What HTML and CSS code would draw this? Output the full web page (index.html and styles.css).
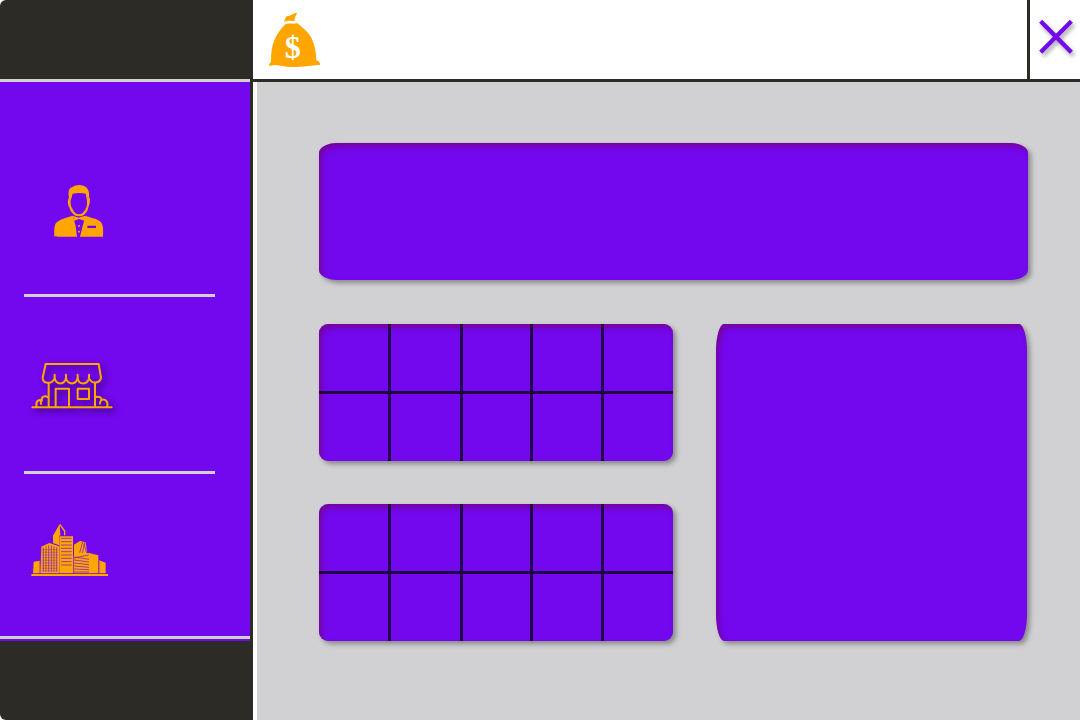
FILE: index.html
```html
<!DOCTYPE html>
<html lang="en">
<head>
<meta charset="utf-8">
<meta name="viewport" content="width=device-width, initial-scale=1">
<title>Dashboard</title>
<link rel="stylesheet" href="styles.css">
</head>
<body>
<div class="app">
  <aside class="sidebar">
    <div class="sidebar-head"></div>
    <nav class="nav" aria-label="Main">
      <div class="nav-item nav-item-person">
        <button class="icon-button" type="button" aria-label="Manager">
          <svg width="52" height="54" viewBox="39 27 156 162" fill="#ffa500">
            <path fill-rule="evenodd" d="M87 68C83 48 88 38 98 36C106 28 131 27 141 39C148 47 148 58 147 66C151 70 151 84 146 94C144 107 138 114 132 119C124 125 110 125 102 119C95 113 90 107 88 97C83 90 82 76 87 68ZM98 56C96 62 95 70 92 75V90C95 99 100 108 105 113C109 117 113 118 117 118C121 118 125 117 129 113C135 107 139 99 141 90V75C139 70 139 62 137 56C124 53 110 53 98 56Z"/>
            <path d="M98 122L102 135L107 153L111 185L51 185L48 183L43 185C42 161 43 146 52 140C65 130 82 128 98 122Z"/>
            <path fill-rule="evenodd" d="M136 122C151 128 169 130 180 139C190 148 190 160 189 185L120 185L128 153L133 136ZM142 152V159H168V152Z"/>
            <path d="M99 122L115 128L135 122L136 138L117 132L101 138Z"/>
            <circle cx="117" cy="153" r="3"/><circle cx="117" cy="170" r="3"/>
          </svg>
        </button>
      </div>
      <div class="nav-item nav-item-shop">
        <button class="icon-button icon-raised" type="button" aria-label="Shop">
          <svg width="82" height="47" viewBox="33 38 246 141" fill="none" stroke="#ffa500" stroke-width="6" stroke-linejoin="round" stroke-linecap="round">
            <path d="M77 41H236L243 82C241 99 216 103 207 84C201 105 177 104 173 84C167 105 144 104 138 84C132 105 109 104 104 84C94 105 68 99 68 82L77 41"/>
            <path d="M104 73V85M138 73V85M173 73V85M207 73V85"/>
            <path d="M86 99V169M225 99V169M107 169V115H147V169M173 115H207V146H173Z"/>
            <path d="M37 171H275M50 169C46 153 56 146 66 150C62 139 76 134 84 141M66 150C61 153 62 158 63 161M227 140C237 137 245 141 244 149C256 144 266 155 261 169M244 149C241 153 239 157 240 160"/>
          </svg>
        </button>
      </div>
      <div class="nav-item nav-item-city">
        <button class="icon-button" type="button" aria-label="City">
          <svg width="79" height="54" viewBox="30 24 237 162" fill="#ffa500">
            <path d="M34 177H264V183H34ZM39 175L41 140L59 137V175ZM61 175L64 95L88 84L117 94V175ZM118 175V64H159V175ZM99 84V62L119 27L121 62H117V91ZM162 89L180 78L197 82L202 116L162 122ZM161 122L208 114L235 121V175H161ZM238 136L257 143V175H238Z"/>
            <path d="M119 28L134 48V61" fill="none" stroke="#ffa500" stroke-width="4"/>
            <g fill="none" stroke="#7307ee" stroke-width="2">
              <path d="M123 70H155M123 80H155M123 90H155M123 100H155M123 110H155M123 120H155M123 130H155M123 140H155M123 150H155"/>
              <path d="M70 98V170M78 94V170M86 91V170M94 91V170M102 94V170M110 97V170"/>
              <path stroke-width="1" d="M65 104H113M65 112H113M65 120H113M65 128H113M65 136H113M65 144H113M65 152H113M65 160H113M65 168H113"/>
              <path d="M162 126L207 133M162 135L207 141M162 144L207 149M162 153L207 157M162 162L207 164M162 171L207 171M162 129L206 120"/>
              <path d="M179 113L188 81M187 114L194 82M192 86L200 114"/>
            </g>
          </svg>
        </button>
      </div>
    </nav>
    <div class="sidebar-foot"></div>
  </aside>

  <div class="content">
    <header class="topbar">
      <div class="money">
        <svg width="53" height="56" viewBox="39 36 159 168" role="img" aria-label="Money">
          <path fill="#ffa500" d="M87 65L93 50C101 46 108 47 114 42C118 39 122 38 127 39C122 46 119 54 118 64C109 61 98 62 87 65ZM91 73C103 67 114 74 126 69C142 82 159 95 169 113C179 132 184 158 184 181C193 183 196 190 195 194C181 195 168 197 154 199C128 202 98 202 78 197L58 195L43 198C40 193 44 190 48 185C48 164 49 142 58 121C65 104 76 87 91 73Z"/>
          <text class="money-sign" x="113" y="173" text-anchor="middle">$</text>
        </svg>
      </div>
      <button class="close" type="button" aria-label="Close">
        <svg width="36" height="36" viewBox="114 57 108 108" fill="none" stroke="#7307ee" stroke-width="13" stroke-linecap="butt">
          <path d="M122 64L214 157M214 64L122 157"/>
        </svg>
      </button>
    </header>
    <main class="board">
      <section class="card card-wide"></section>
      <section class="card card-cells">
        <div class="cell"></div><div class="cell"></div><div class="cell"></div><div class="cell"></div><div class="cell"></div>
        <div class="cell"></div><div class="cell"></div><div class="cell"></div><div class="cell"></div><div class="cell"></div>
      </section>
      <section class="card card-tall"></section>
      <section class="card card-cells">
        <div class="cell"></div><div class="cell"></div><div class="cell"></div><div class="cell"></div><div class="cell"></div>
        <div class="cell"></div><div class="cell"></div><div class="cell"></div><div class="cell"></div><div class="cell"></div>
      </section>
    </main>
  </div>
</div>
</body>
</html>
```
FILE: styles.css
```css
:root {
  --purple: #7307ee;
  --dark: #2d2b26;
  --grey: #d1d1d3;
}

* { box-sizing: border-box; }

body {
  margin: 0;
  background: #fff;
  font-family: "Liberation Serif", serif;
}

svg { display: block; }

.app {
  display: flex;
  min-height: 100vh;
}

.sidebar {
  display: flex;
  flex-direction: column;
  flex: 0 0 253px;
  border-right: 3px solid var(--dark);
  border-radius: 6px 0 0 6px;
  background: var(--dark);
  overflow: hidden;
}

.sidebar-head { height: 79px; }

.sidebar-foot {
  height: 81px;
  border-top: 2px solid var(--purple);
}

.nav {
  display: grid;
  grid-template-rows: 169fr 177fr 162fr;
  flex: 1;
  padding-top: 46px;
  border-top: 3px solid var(--grey);
  border-bottom: 3px solid var(--grey);
  background: var(--purple);
}

.nav-item {
  display: flex;
  align-items: center;
  margin: 0 35px 0 24px;
  border-bottom: 3px solid var(--grey);
}

.nav-item-person { padding-left: 29px; }
.nav-item-shop { padding: 4px 0 0 7px; }
.nav-item-city { padding: 0 0 10px 6px; border-bottom: 0; }

.icon-button {
  padding: 0;
  border: 0;
  background: none;
  cursor: pointer;
}

.icon-raised svg {
  overflow: visible;
  filter: drop-shadow(3px 3px 3px rgba(0, 0, 0, 0.6));
}

.content {
  display: flex;
  flex-direction: column;
  flex: 1;
}

.topbar {
  display: flex;
  justify-content: space-between;
  height: 82px;
  border-bottom: 3px solid var(--dark);
}

.money { padding: 12px 15px; }

.money-sign {
  fill: #fff;
  font: bold 96px "Liberation Serif", serif;
}

.close {
  width: 53px;
  padding: 0 0 5px 8px;
  border: 0;
  border-left: 3px solid var(--dark);
  background: #fff;
  cursor: pointer;
}

.close svg {
  overflow: visible;
  filter: drop-shadow(2px 3px 2px rgba(0, 0, 0, 0.35));
}

.board {
  display: grid;
  grid-template-columns: 354fr 312fr;
  grid-template-rows: 138fr 137fr 137fr;
  gap: 43px;
  flex: 1;
  padding: 61px 52px 79px 62px;
  border-left: 4px solid #fff;
  background: var(--grey);
}

.card {
  background: var(--purple);
  box-shadow:
    3px 3px 5px rgba(0, 0, 0, 0.35),
    inset 3px 4px 5px rgba(120, 0, 80, 0.5);
}

.card-wide {
  grid-column: 1 / -1;
  margin-bottom: 1px;
  border-radius: 18px / 10px;
}

.card-tall {
  grid-row: 2 / 4;
  grid-column: 2;
  margin-right: 1px;
  border-radius: 8px / 28px;
}

.card-cells {
  display: grid;
  grid-template-columns: 72fr 72fr 70fr 71fr 69fr;
  grid-template-rows: 70fr 67fr;
  border-radius: 9px;
}

.cell { border: 0 solid rgba(0, 0, 0, 0.7); }
.cell:not(:nth-child(5n)) { border-right-width: 3px; }
.cell:nth-child(-n + 5) { border-bottom-width: 3px; }
```
